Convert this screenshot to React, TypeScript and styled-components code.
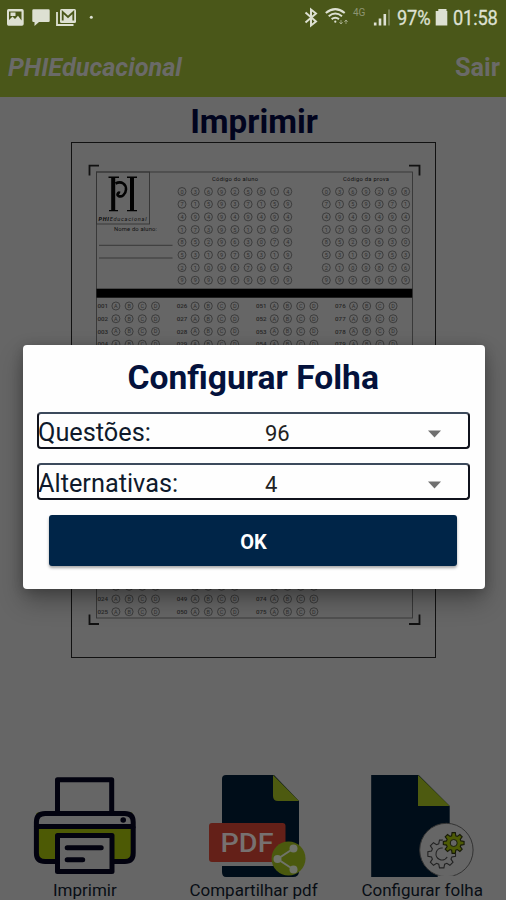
import React from "react";
import styled, { createGlobalStyle } from "styled-components";

const GlobalStyle = createGlobalStyle`
  * { box-sizing: border-box; }
  body { margin: 0; background: #666; font-family: Roboto, "Liberation Sans", sans-serif; overflow: hidden; }
  svg { display: block; }
`;

const Screen = styled.main`
  display: flex;
  flex-direction: column;
  width: 506px;
  height: 900px;
  background: #666;
  overflow: hidden;

  > * { flex-shrink: 0; }
`;

const StatusBar = styled.div`
  display: flex;
  justify-content: space-between;
  height: 36px;
  padding: 0 8px 0 7px;
  background: #4a5719;
  color: #dde0d2;
`;

const StatusGroup = styled.div`
  display: flex;
  align-items: center;
`;

const StatusText = styled.span<{ $width: number }>`
  display: block;
  width: ${(p) => p.$width}px;
  font-size: 21px;
  line-height: 37px;
  letter-spacing: -0.2px;
  white-space: nowrap;
  -webkit-text-stroke: 0.3px #dde0d2;
  transform: scaleX(0.87);
  transform-origin: left center;
`;

const Toolbar = styled.header`
  display: flex;
  justify-content: space-between;
  align-items: center;
  height: 61px;
  padding: 1px 6px 0 8px;
  background: #4a5719;
  color: #6a6a68;
  font-size: 25.3px;
  font-weight: 700;
`;

const Brand = styled.span`
  font-style: italic;
`;

const Title = styled.h1`
  margin: 0;
  height: 45px;
  padding: 5px 0 0 2px;
  text-align: center;
  font-size: 33.2px;
  line-height: 39px;
  font-weight: 700;
  color: #01041e;
  white-space: nowrap;
`;

const Sheet = styled.section`
  align-self: center;
  width: 365px;
  height: 516px;
  border: 1.5px solid #111;
`;

const Actions = styled.nav`
  display: grid;
  grid-template-columns: repeat(3, 1fr);
  margin-top: 112px;
`;

const Action = styled.div`
  display: flex;
  flex-direction: column;
  align-items: center;
`;

const ActionLabel = styled.span`
  height: 22px;
  line-height: 24px;
  padding-left: 1px;
  font-size: 17px;
  color: #080d14;
  white-space: nowrap;
`;

const Backdrop = styled.div`
  position: absolute;
  top: 345px;
  left: 23px;
  width: 461.5px;
`;

const Dialog = styled.section`
  height: 244px;
  padding: 7px 15px 0 14px;
  border-radius: 4px;
  background: #fefefe;
  box-shadow: 0 12px 24px rgba(0, 0, 0, 0.3), 0 2px 12px rgba(0, 0, 0, 0.2);
`;

const DialogTitle = styled.h2`
  margin: 0 0 15px;
  height: 45px;
  text-align: center;
  font-size: 33.6px;
  line-height: 51px;
  font-weight: 700;
  color: #04123c;
  white-space: nowrap;
`;

const Field = styled.div`
  display: grid;
  grid-template-columns: 226px 1fr 40px;
  align-items: center;
  height: 37px;
  margin-bottom: 14px;
  border: 2px solid #10131d;
  border-top-color: #3c4a5c;
  border-radius: 4px;
  white-space: nowrap;
`;

const FieldLabel = styled.label`
  margin-left: -1px;
  padding-top: 2px;
  font-size: 25.3px;
  line-height: 34px;
  color: #0f1a2c;
  font-weight: 400;
`;

const FieldValue = styled.span`
  padding-top: 3px;
  font-size: 22px;
  line-height: 30px;
  color: #222;
`;

const Arrow = styled.svg`
  margin-top: 3px;
`;

const OkButton = styled.button`
  display: block;
  width: 408px;
  height: 51px;
  margin: 15px 0 0 12.4px;
  padding: 2px 0 0;
  border: 0;
  border-radius: 3px;
  background: #002548;
  color: #fff;
  font: 700 20px Roboto, "Liberation Sans", sans-serif;
  box-shadow: 0 2px 3px rgba(0, 0, 0, 0.35);
`;

const seed = (r: number, c: number) => (r * 7 + c * 3 + r * c) % 10;

function Bubble({ x, y, mark }: { x: number; y: number; mark: string | number }) {
  return (
    <g opacity="0.88">
      <circle cx={x} cy={y} r="4" fill="none" stroke="#2c2c2c" strokeWidth="0.8" />
      <text x={x} y={y + 2} fontSize="5.5" textAnchor="middle" fill="#282828">{mark}</text>
    </g>
  );
}

function CodeGrid({ x, cols }: { x: number; cols: number }) {
  return (
    <>
      {Array.from({ length: 8 * cols }, (_, i) => {
        const r = Math.floor(i / cols);
        const c = i % cols;
        return <Bubble key={i} x={x + c * 13.22} y={191.5 + r * 12.68} mark={seed(r, c)} />;
      })}
    </>
  );
}

function Questions() {
  return (
    <>
      {Array.from({ length: 96 }, (_, i) => {
        const col = Math.floor(i / 25);
        const y = 306 + (i % 25) * 12.74;
        const x = 97.5 + col * 79.2;
        return (
          <g key={i}>
            <text x={x} y={y + 2.2} fontSize="6.2" fontWeight="500" fill="#262626">
              {String(i + 1).padStart(3, "0")}
            </text>
            {["A", "B", "C", "D"].map((m, k) => (
              <Bubble key={m} x={x + 18.4 + k * 13.2} y={y} mark={m} />
            ))}
          </g>
        );
      })}
    </>
  );
}

function AnswerSheet() {
  return (
    <svg width="362" height="513" viewBox="72 143 362 513" fontFamily="Roboto, sans-serif">
      <g fill="none" stroke="#111" strokeWidth="1.8">
        <path d="M89.5 175.5V165.7H99M409 165.7H419.5V175.5M89.5 614.5V624H99M409 624H419.5V614.5" />
      </g>
      <rect x="96.5" y="172" width="316" height="446" fill="none" stroke="#363636" strokeWidth="0.9" />
      <rect x="96.5" y="172" width="53" height="52" fill="none" stroke="#333" strokeWidth="0.9" />
      <g fill="none" stroke="#030303">
        <path strokeWidth="4" d="M113.2 178V210M132 178V210" />
        <path strokeWidth="1.4" d="M108.5 177.3H119M127 177.3H137M109 210.6H118M127 210.6H137" />
        <path strokeWidth="2.6" d="M115.5 183.5C122 180.5 126.2 184.5 126 189.5C125.8 194.5 121.5 197.5 118.5 196C116.5 194.5 118 192 120 193" />
      </g>
      <text x="98.5" y="220.5" fontSize="5.6" fontStyle="italic" fill="#111" textLength="48">
        <tspan fontWeight="900">PHI</tspan>Educacional
      </text>
      <text x="114" y="231.3" fontSize="5.8" fill="#111" textLength="43">Nome do aluno:</text>
      <text x="212" y="181.3" fontSize="5.8" fill="#111" textLength="46">Código do aluno</text>
      <text x="343" y="181.3" fontSize="5.8" fill="#111" textLength="46">Código da prova</text>
      <path d="M99 245.3H172.5M99 258H172.5" stroke="#333" strokeWidth="0.9" />
      <CodeGrid x={182} cols={9} />
      <CodeGrid x={326.3} cols={7} />
      <rect x="96.5" y="288.7" width="315.7" height="9" fill="#000" />
      <Questions />
    </svg>
  );
}

const gearPath = (cx: number, cy: number, outer: number, inner: number, teeth = 8) => {
  const pts: string[] = [];
  for (let i = 0; i < teeth; i++) {
    const a = (i * 2 * Math.PI) / teeth;
    const s = Math.PI / teeth;
    [[-0.72, inner], [-0.4, outer], [0.4, outer], [0.72, inner]].forEach(([k, r]) => {
      pts.push(`${(cx + Math.cos(a + k * s) * r).toFixed(2)} ${(cy + Math.sin(a + k * s) * r).toFixed(2)}`);
    });
  }
  return `M${pts.join("L")}Z`;
};

function PrinterIcon() {
  return (
    <svg width="104" height="108" viewBox="32.3 770 104 108">
      <g fill="none" stroke="#02020f" strokeWidth="5" strokeLinejoin="round">
        <path d="M36.7 826V813.5Q36.7 813 38 812.5H132.5L133.5 826V853Q133.5 861.5 125 861.5H45.5Q36.7 861.5 36.7 853Z" fill="#4d5a05" stroke="none" />
        <path d="M45.5 813.5H125Q133.5 813.5 133.5 822V826.5H36.7V822Q36.7 813.5 45.5 813.5Z" fill="#666" />
        <path d="M36.7 826.5V853Q36.7 861.5 45.5 861.5H56M114 861.5H125Q133.5 861.5 133.5 853V826.5" />
        <path d="M57.8 812V779.8H112V812" />
        <path d="M57.8 835.5H112.3V871.5H57.8Z" fill="#666" />
        <path d="M67.5 847.7H101.5M67.5 859.8H83" strokeLinecap="round" />
      </g>
      <circle cx="123.5" cy="820" r="2.8" fill="#02020f" />
    </svg>
  );
}

function PdfIcon() {
  return (
    <svg width="104" height="108" viewBox="201 770 104 108" overflow="visible" fontFamily="Roboto, sans-serif">
      <path d="M226 775H274L299 801V871Q299 877 293 877H226Q222 877 222 872V779Q222 775 226 775Z" fill="#000d19" />
      <path d="M273 775L299 801H278Q273 801 273 796Z" fill="#4d5a10" />
      <path d="M212 861.5H274V866H222Z" fill="#666" />
      <rect x="209" y="823" width="76.5" height="39" rx="3" fill="#642018" />
      <text x="220.5" y="852" fontSize="26" fontWeight="500" fill="#777170" textLength="53" lengthAdjust="spacingAndGlyphs">PDF</text>
      <circle cx="288.5" cy="858.5" r="17" fill="#4b590e" />
      <path d="M293.5 848.5L277.5 859L293.5 869.5" fill="none" stroke="#70746a" strokeWidth="2" />
      <g fill="#70746a"><circle cx="293.5" cy="848.5" r="4" /><circle cx="277.5" cy="859" r="4" /><circle cx="293.5" cy="869.5" r="4" /></g>
    </svg>
  );
}

function SheetConfigIcon() {
  return (
    <svg width="104" height="108" viewBox="370.3 770 104 108" overflow="visible">
      <path d="M371.5 775H419L450 806V877H371.5Z" fill="#000d19" />
      <path d="M418.3 775L450 806H418.3Z" fill="#4d5a10" />
      <circle cx="446.7" cy="850" r="26.7" fill="#666" stroke="#333" strokeWidth="1" />
      <path d="M438 877H454" stroke="#666" strokeWidth="3" />
      <path d={gearPath(442, 854, 14, 10.6)} fill="none" stroke="#222" strokeWidth="1.1" />
      <path d="M443 848A6 6 0 1 0 447.5 857" fill="none" stroke="#222" strokeWidth="1.1" />
      <circle cx="454" cy="843" r="11.3" fill="#666" />
      <path d={gearPath(454, 843, 10.5, 7.5)} fill="#4d5a05" stroke="#171a08" strokeWidth="1.1" />
      <circle cx="454" cy="843" r="3.5" fill="#666" stroke="#1b1f08" strokeWidth="1" />
    </svg>
  );
}

function NotificationIcons() {
  return (
    <svg width="90" height="36" viewBox="7 0 90 36" fill="#dde0d2">
      <path fillRule="evenodd" d="M8.5 9H22Q23.7 9 23.7 10.7V24Q23.7 25.7 22 25.7H8.5Q7 25.7 7 24V10.7Q7 9 8.5 9ZM9 11.5V20L12.5 16.5L15 19L18 15.8L21.5 20.5V11.5Z" />
      <path d="M10.5 12.5H15.5V16H10.5Z" />
      <path d="M33.5 9.3H48.5Q49.7 9.3 49.7 10.5V21Q49.7 22 48.5 22H39L34.5 26V22H33.5Q32.3 22 32.3 21V10.5Q32.3 9.3 33.5 9.3Z" />
      <rect x="60" y="9" width="16" height="14" rx="1.5" />
      <path d="M57 12V25H73.5" stroke="#dde0d2" strokeWidth="1.8" fill="none" />
      <path d="M62.7 20.5V12L68 17L73.3 12V20.5" stroke="#4a5719" strokeWidth="1.8" fill="none" />
      <circle cx="91.3" cy="17.3" r="1.5" />
    </svg>
  );
}

function SignalIcons() {
  return (
    <svg width="93" height="36" viewBox="304 0 93 36" fill="none" stroke="#dde0d2" strokeWidth="2">
      <path d="M305.5 12.5L316 21.5L311 25.5V9.5L316 13.5L305.5 22.5" />
      <path d="M325.8 13Q335.3 5.2 344.7 13M328.7 16.2Q335.3 10.8 342 16.2M331.6 19.1Q335.3 16.4 339 19.1" />
      <circle cx="335.3" cy="21.7" r="1.1" fill="#dde0d2" stroke="none" />
      <path d="M341 24V20M339.3 22L341 24L342.7 22M346 20V24M344.3 22L346 20L347.7 22" strokeWidth="1" opacity=".5" />
      <text x="353" y="16" fontSize="10" fontFamily="Roboto, sans-serif" fill="#8d9472" stroke="none">4G</text>
      <path d="M375.2 22.5V25.5M380 18.5V25.5M384.8 14V25.5" strokeWidth="2.6" />
      <path d="M389 9.5V25.5" strokeWidth="1.8" opacity=".35" />
    </svg>
  );
}

function BatteryIcon() {
  return (
    <svg width="18" height="36" viewBox="435 0 18 36" fill="#dde0d2">
      <path d="M438.3 9H446.5V11H447.3V25.5H435.7V11H438.3Z" />
    </svg>
  );
}

function SelectField({ label, value }: { label: string; value: string }) {
  return (
    <Field>
      <FieldLabel>{label}</FieldLabel>
      <FieldValue>{value}</FieldValue>
      <Arrow width="13" height="8" viewBox="0 0 13 8"><path d="M0 .5H13L6.5 7.5Z" fill="#707070" /></Arrow>
    </Field>
  );
}

export default function App() {
  return (
    <>
      <GlobalStyle />
      <Screen>
        <StatusBar>
          <StatusGroup><NotificationIcons /></StatusGroup>
          <StatusGroup>
            <SignalIcons />
            <StatusText $width={38}>97%</StatusText>
            <BatteryIcon />
            <StatusText $width={45}>01:58</StatusText>
          </StatusGroup>
        </StatusBar>
        <Toolbar>
          <Brand>PHIEducacional</Brand>
          <span>Sair</span>
        </Toolbar>
        <Title>Imprimir</Title>
        <Sheet><AnswerSheet /></Sheet>
        <Actions>
          <Action><PrinterIcon /><ActionLabel>Imprimir</ActionLabel></Action>
          <Action><PdfIcon /><ActionLabel>Compartilhar pdf</ActionLabel></Action>
          <Action><SheetConfigIcon /><ActionLabel>Configurar folha</ActionLabel></Action>
        </Actions>
      </Screen>
      <Backdrop>
        <Dialog>
          <DialogTitle>Configurar Folha</DialogTitle>
          <SelectField label="Questões:" value="96" />
          <SelectField label="Alternativas:" value="4" />
          <OkButton>OK</OkButton>
        </Dialog>
      </Backdrop>
    </>
  );
}
